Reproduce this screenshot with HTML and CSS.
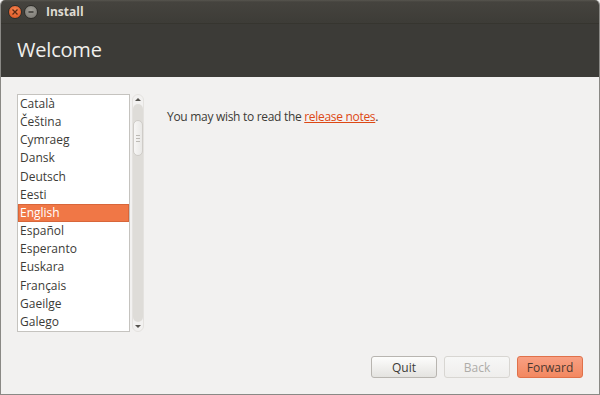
FILE: index.html
```html
<!DOCTYPE html>
<html>
<head>
<meta charset="utf-8">
<link rel="stylesheet" href="styles.css">
</head>
<body>
<div class="window">
  <div class="titlebar">
    <div class="controls">
      <span class="ctl close"><svg width="8" height="8" viewBox="0 0 8 8"><path d="M1.5 1.5 L6.5 6.5 M6.5 1.5 L1.5 6.5" stroke="#5a2a14" stroke-width="1.3"/></svg></span>
      <span class="ctl min"><svg width="8" height="8" viewBox="0 0 8 8"><path d="M1.5 4 H6.5" stroke="#3a3935" stroke-width="1.4"/></svg></span>
    </div>
    <span class="title">Install</span>
  </div>
  <div class="header">
    <h1>Welcome</h1>
  </div>
  <div class="content">
    <div class="main">
      <div class="langs">
        <div class="list">
          <div class="item">Català</div>
          <div class="item">Čeština</div>
          <div class="item">Cymraeg</div>
          <div class="item">Dansk</div>
          <div class="item">Deutsch</div>
          <div class="item">Eesti</div>
          <div class="item sel">English</div>
          <div class="item">Español</div>
          <div class="item">Esperanto</div>
          <div class="item">Euskara</div>
          <div class="item">Français</div>
          <div class="item">Gaeilge</div>
          <div class="item">Galego</div>
        </div>
        <div class="scroll">
          <div class="arrow up"></div>
          <div class="track"><div class="thumb"><span></span><span></span><span></span></div></div>
          <div class="arrow down"></div>
        </div>
      </div>
      <p class="notes">You may wish to read the <a href="#">release notes</a>.</p>
    </div>
    <div class="buttons">
      <button class="btn">Quit</button>
      <button class="btn disabled">Back</button>
      <button class="btn primary">Forward</button>
    </div>
  </div>
</div>
</body>
</html>
```

FILE: styles.css
```css
html, body {
  margin: 0;
  padding: 0;
  background: #f2f1f0;
  font-family: "Open Sans", "DejaVu Sans", sans-serif;
}
.window {
  width: 600px;
  height: 395px;
  box-sizing: border-box;
  border: 1px solid #8a8985;
  border-top: none;
  border-radius: 5px 5px 0 0;
  overflow: hidden;
  display: flex;
  flex-direction: column;
  background: #f2f1f0;
}
.titlebar {
  height: 24px;
  background: linear-gradient(#57554f 0, #45433e 2px, #3d3c37 100%);
  display: flex;
  align-items: center;
  padding-left: 7px;
  box-sizing: border-box;
  border-bottom: 1px solid #36352f;
}
.controls {
  display: flex;
  gap: 2px;
}
.ctl {
  width: 14px;
  height: 14px;
  border-radius: 50%;
  display: flex;
  align-items: center;
  justify-content: center;
  box-sizing: border-box;
}
.ctl.close {
  background: radial-gradient(circle at 50% 35%, #f7834f, #d9531f);
  border: 1px solid #2e2d29;
}
.ctl.min {
  background: radial-gradient(circle at 50% 35%, #a09e97, #76746e);
  border: 1px solid #2e2d29;
}
.title {
  color: #dfdbd2;
  font-weight: bold;
  font-size: 12px;
  margin-left: 8px;
}
.header {
  height: 53px;
  background: #3c3b37;
  display: flex;
  align-items: center;
  padding-left: 16px;
  padding-bottom: 3px;
  box-sizing: border-box;
}
.header h1 {
  margin: 0;
  font-weight: normal;
  font-size: 20px;
  letter-spacing: -0.2px;
  color: #f0efec;
}
.content {
  flex: 1;
  display: flex;
  flex-direction: column;
  padding: 17px 16px 16px 16px;
}
.main {
  flex: 1;
  display: flex;
}
.langs {
  display: flex;
  gap: 2px;
  height: 238px;
}
.list {
  width: 113px;
  background: #fff;
  border: 1px solid #c5c3bf;
  box-sizing: border-box;
  padding: 0;
  display: flex;
  flex-direction: column;
}
.item {
  height: 18.2px;
  line-height: 18px;
  font-size: 12px;
  color: #3c3b37;
  padding-left: 2px;
  margin: 0 0 0 0;
}
.item.sel {
  background: #f07746;
  color: #fff;
  border: 1px solid #d8663a;
  height: 16.2px;
  line-height: 16px;
  padding-left: 1px;
}
.scroll {
  width: 12px;
  display: flex;
  flex-direction: column;
  align-items: center;
  background: #f2f1f0;
  border-radius: 6px;
  border: 1px solid #e4e2df;
  box-sizing: border-box;
}
.arrow {
  width: 0;
  height: 0;
  border-left: 3px solid transparent;
  border-right: 3px solid transparent;
  margin: 3px 0;
}
.arrow.up { border-bottom: 3px solid #55534e; }
.arrow.down { border-top: 3px solid #55534e; }
.track {
  flex: 1;
  width: 10px;
  background: #dedcd8;
  border-radius: 5px;
}
.thumb {
  height: 36px;
  margin-top: 16px;
  background: linear-gradient(90deg, #f7f6f5, #e9e8e6);
  border: 1px solid #cfccc8;
  border-radius: 5px;
  box-sizing: border-box;
  display: flex;
  flex-direction: column;
  align-items: center;
  justify-content: center;
  gap: 2px;
}
.thumb span {
  width: 4px;
  height: 1px;
  background: #bdbab5;
}
.notes {
  margin: 14px 0 0 23px;
  font-size: 12px;
  letter-spacing: -0.3px;
  color: #3c3b37;
}
.notes a {
  color: #dd4814;
  text-decoration: underline;
}
.buttons {
  display: flex;
  justify-content: flex-end;
  gap: 7px;
  padding-right: 0;
}
.btn {
  width: 66px;
  height: 22px;
  font-family: inherit;
  font-size: 12px;
  color: #3c3b37;
  border: 1px solid #b8b5b0;
  border-radius: 3px;
  background: linear-gradient(#fdfdfc, #e4e3e0);
  padding: 0;
}
.btn.disabled {
  color: #aeaca8;
  border-color: #d8d6d2;
  background: linear-gradient(#f7f7f6, #efeeec);
}
.btn.primary {
  background: linear-gradient(#f8a083, #f38860);
  border-color: #e0714a;
  color: #4a3830;
}
```
